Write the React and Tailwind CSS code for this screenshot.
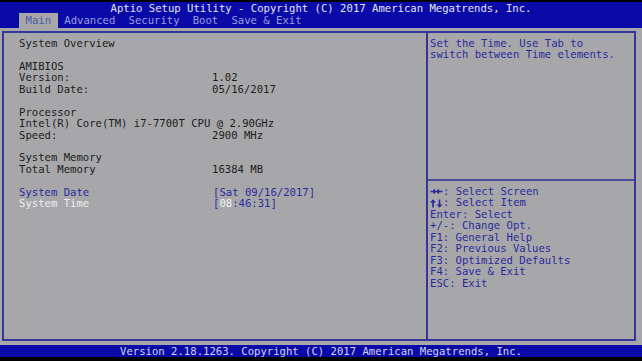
import React from 'react';

const overview = [
    { label: 'System Overview' },
    { gap: true },
    { label: 'AMIBIOS' },
    { label: 'Version:', value: '1.02' },
    { label: 'Build Date:', value: '05/16/2017' },
    { gap: true },
    { label: 'Processor' },
    { label: 'Intel(R) Core(TM) i7-7700T CPU @ 2.90GHz' },
    { label: 'Speed:', value: '2900 MHz' },
    { gap: true },
    { label: 'System Memory' },
    { label: 'Total Memory', value: '16384 MB' },
    { gap: true },
];

const help = [
    ['lr', ': Select Screen'],
    ['ud', ': Select Item'],
    ['', 'Enter: Select'],
    ['', '+/-: Change Opt.'],
    ['', 'F1: General Help'],
    ['', 'F2: Previous Values'],
    ['', 'F3: Optimized Defaults'],
    ['', 'F4: Save & Exit'],
    ['', 'ESC: Exit'],
];

const tabs = ['Main', 'Advanced', 'Security', 'Boot', 'Save & Exit'];

const mono = { fontFamily: '"DejaVu Sans Mono", "Liberation Mono", monospace' };

// little arrow pair glyphs of the help list
const Arrows = ({ kind }) => (
    <svg width="13" height="11" viewBox="0 0 13 11" className="shrink-0">
        {kind === 'lr' ? (
            <g stroke="currentColor" strokeWidth="1.6" fill="none">
                <path d="M0.5 5.5h5M3.5 3.5l2 2-2 2" />
                <path d="M7 5.5h5.5M9 3.5l-2 2 2 2" />
            </g>
        ) : (
            <g stroke="currentColor" strokeWidth="1.6" fill="none">
                <path d="M3 9.5v-7M1 4.5l2-2 2 2" />
                <path d="M9.5 1.5v7M7.5 6.5l2 2 2-2" />
            </g>
        )}
    </svg>
);

export default function App() {
    return (
        <div className="w-[642px] h-[361px] bg-black flex flex-col overflow-hidden text-[10.6px] leading-[11.45px] whitespace-pre" style={mono}>
            {/* HEADER */}
            <div className="mt-[2px] h-[26px] bg-[#0a0aa8] flex flex-col">
                <div className="h-[11px] pt-[1px] text-center text-[#e4e4ee]">
                    Aptio Setup Utility - Copyright (C) 2017 American Megatrends, Inc.
                </div>
                <div className="flex items-end h-[15px] pl-[19px]">
                    {tabs.map((t, i) => (
                        <div
                            key={t}
                            className={
                                i === 0
                                    ? 'h-[15px] px-[6.6px] flex items-center bg-[#a7a7a9] text-[#4a5aa8]'
                                    : 'h-[15px] px-[6.6px] flex items-center text-[#9c9ce0]'
                            }
                        >
                            {t}
                        </div>
                    ))}
                </div>
            </div>

            {/* BODY */}
            <div className="h-[317px] bg-[#a7a7a9] pt-[3px] pl-[2px] pr-[6px] pb-[4px] flex">
                <div className="flex-1 flex border-2 border-[#34349a]">
                    {/* left panel */}
                    <div className="w-[422px] pl-[15px] pt-[5px] text-[#1c1c1e]">
                        {overview.map((r, i) =>
                            r.gap ? (
                                <div key={i} className="h-[11.45px]" />
                            ) : (
                                <div key={i} className="flex h-[11.45px]">
                                    <span className="w-[193px]">{r.label}</span>
                                    {r.value && <span>{r.value}</span>}
                                </div>
                            )
                        )}
                        <div className="flex h-[11.45px] text-[#2a2aa0]">
                            <span className="w-[194px]">System Date</span>
                            <span>[Sat 09/16/2017]</span>
                        </div>
                        <div className="flex h-[11.45px]">
                            <span className="w-[194px] text-[#ececf2]">System Time</span>
                            <span className="text-[#2a2aa0]">
                                [<span className="text-[#f4f4f8]">08</span>:46:31]
                            </span>
                        </div>
                    </div>

                    {/* right panel */}
                    <div className="flex-1 flex flex-col border-l-2 border-[#34349a] text-[#2a2aa0]">
                        <div className="h-[146px] pl-[2px] pt-[5px]">
                            <div>Set the Time. Use Tab to</div>
                            <div>switch between Time elements.</div>
                        </div>
                        <div className="h-[2px] bg-[#34349a] opacity-80" />
                        <div className="pl-[2px] pt-[5px]">
                            {help.map(([k, v], i) => (
                                <div key={i} className="flex items-center h-[11.45px]">
                                    {k && <Arrows kind={k} />}
                                    <span>{v}</span>
                                </div>
                            ))}
                        </div>
                    </div>
                </div>
            </div>

            {/* FOOTER */}
            <div className="h-[12px] bg-[#0a0aa8] text-center text-[#d4d4e8] leading-[12px]">
                Version 2.18.1263. Copyright (C) 2017 American Megatrends, Inc.
            </div>
        </div>
    );
}
